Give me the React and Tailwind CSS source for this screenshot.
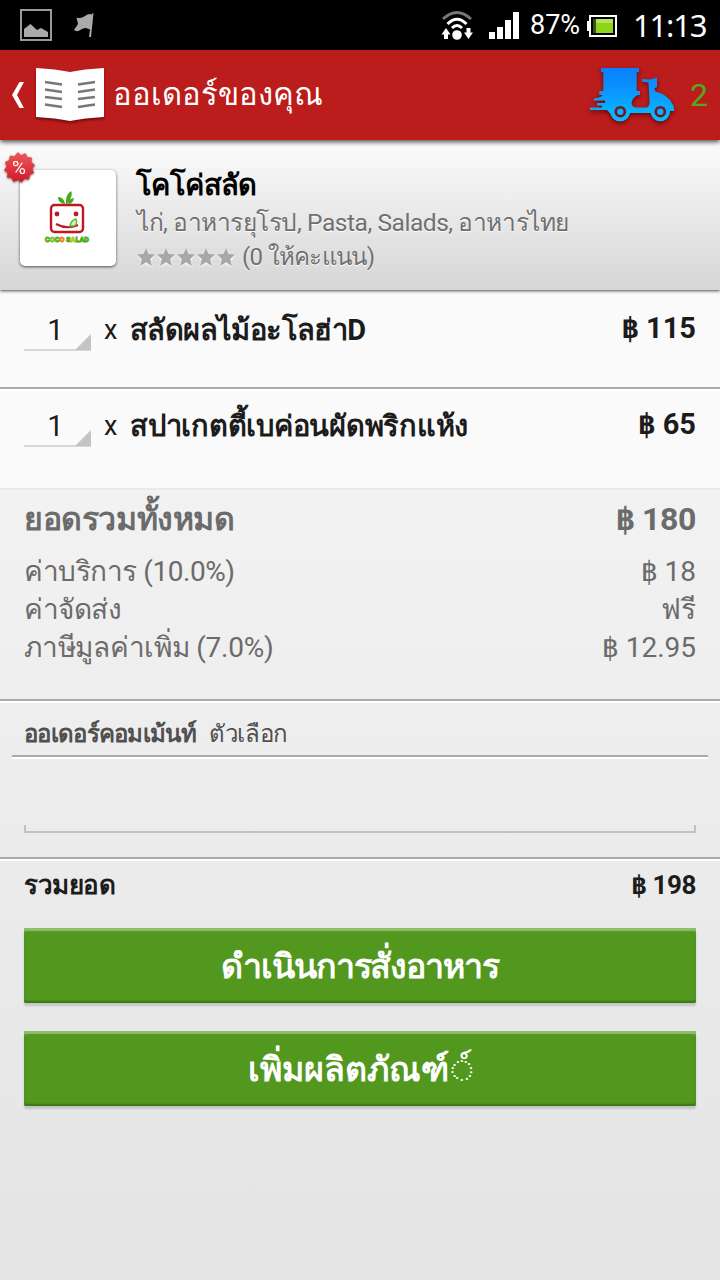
const items = [
  { qty: 1, name: 'สลัดผลไม้อะโลฮ่าD', price: '฿ 115', row: 'h-[97px] pt-[18px]', tracking: 'tracking-[-0.6px]' },
  { qty: 1, name: 'สปาเกตตี้เบค่อนผัดพริกแห้ง', price: '฿ 65', row: 'h-[97px] pt-[13px]', tracking: 'tracking-[-0.25px]' },
];

const fees = [
  { label: 'ค่าบริการ (10.0%)', value: '฿ 18', tracking: 'tracking-[-0.45px]' },
  { label: 'ค่าจัดส่ง', value: 'ฟรี', tracking: 'tracking-[-0.5px]' },
  { label: 'ภาษีมูลค่าเพิ่ม (7.0%)', value: '฿ 12.95', tracking: 'tracking-[-0.25px]' },
];

function StatusBar() {
  return (
    <div className="flex h-[50px] items-center bg-black text-white">
      <svg className="ml-5 h-8 w-8" viewBox="0 0 32 32">
        <rect x="1" y="1" width="30" height="30" fill="none" stroke="#999" strokeWidth="2" />
        <path d="M4 28V20L10.500 15L17 21L21 19L28 23V28Z" fill="#aaa" />
      </svg>
      <svg className="ml-[22px] h-6 w-5" viewBox="0 0 20 24">
        <path d="M2.500 4.500Q7 6 11 3T18 1.500L18.500 0L19.500 0.500L17 24H15L16 16.500Q11 13.500 7 16.500T0 17L4 11Z" fill="#aaa" />
      </svg>
      <div className="flex-1" />
      <svg className="h-8 w-8" viewBox="0 0 32 32">
        <g fill="none" strokeWidth="3">
          <path d="M2 10Q16 -3 30 10" stroke="#777" />
          <path d="M6.500 15Q16 5.500 25.500 15" stroke="#fff" />
          <path d="M11 19Q16 14 21 19" stroke="#fff" />
        </g>
        <circle cx="16" cy="26" r="4.800" fill="#fff" />
        <path d="M5 19L9.500 25.500H7V30H3V25.500H0.500ZM27.500 30L23 23.500H25.500V19H29.500V23.500H32Z" fill="#fff" />
      </svg>
      <svg className="ml-[16px] h-[27px] w-[30px]" viewBox="0 0 30 27">
        <path d="M0 20H6V27H0ZM8 15H14V27H8ZM16 8H22V27H16ZM24 0H30V27H24Z" fill="#fff" />
      </svg>
      <span className="ml-[11px] w-[50px] text-[27px] leading-[54px] whitespace-nowrap">87%</span>
      <svg className="mt-[2px] ml-[7px] h-[22px] w-[30px]" viewBox="0 0 30 22">
        <rect x="3" y="1" width="26" height="20" fill="none" stroke="#fff" strokeWidth="2" />
        <rect x="0" y="6" width="3" height="10" fill="#fff" />
        <rect x="6" y="4" width="20" height="14" fill="#3c4a22" />
        <rect x="9" y="4" width="17" height="14" fill="#8ed516" />
        <rect x="9" y="4" width="17" height="4" fill="#b4e45a" />
      </svg>
      <span className="ml-[16px] w-[87px] font-['Noto_Sans'] text-[31px] leading-[50px] tracking-[-1.2px] whitespace-nowrap">11:13</span>
    </div>
  );
}

function Scooter() {
  return (
    <svg className="h-[60px] w-[90px] drop-shadow-[0_2px_2px_rgba(60,0,0,0.7)]" viewBox="0 0 90 60">
      <defs>
        <linearGradient id="scooter" x1="0" y1="3" x2="0" y2="56" gradientUnits="userSpaceOnUse">
          <stop offset="0" stopColor="#0a80ff" />
          <stop offset="0.4" stopColor="#0b93ff" />
          <stop offset="1" stopColor="#00c0ff" />
        </linearGradient>
      </defs>
      <g fill="url(#scooter)">
        <path d="M13 3H51V7.300H48.700V26H52V30H11.300V26H15.300V7.300H13Z" />
        <path d="M14 29H51.500Q44.500 32 43.500 38Q44 42 47.500 42.500H58Q61.500 42 61.500 37L60.500 17.500L54 16.500V14L62 14.500L69 12.500V22L66.500 23.500L67.500 26.500Q80 30 84 38.500Q86.500 41 86 46H82A10 10 0 0 1 62.500 48H42A10 10 0 0 1 22.500 49L19 45H2V42.500H14V40.500H9V38H17V35.500H5L7 33H10L14 31Z" />
        <circle cx="32.300" cy="46.700" r="9.600" />
        <circle cx="72.300" cy="46.700" r="9.600" />
      </g>
      <g fill="#00b4ff" stroke="#7c1020" strokeWidth="2.600">
        <circle cx="32.300" cy="46.700" r="4.500" />
        <circle cx="72.300" cy="46.700" r="4.500" />
      </g>
    </svg>
  );
}

function ActionBar() {
  return (
    <header className="relative z-10 flex h-[90px] items-center bg-[#bb1c1c] shadow-[0_2px_5px_rgba(0,0,0,0.7)]">
      <svg className="ml-[12px] h-[26px] w-[12px]" viewBox="0 0 12 26">
        <path d="M7.500 0H12L5 13L12 26H7.500L0 13Z" fill="#fff" />
      </svg>
      <svg className="ml-[12px] h-[56px] w-[68px] drop-shadow-[0_2px_1px_rgba(70,0,0,0.6)]" viewBox="0 0 68 56">
        <path d="M0 1Q20 2 34 5Q48 2 68 1V50Q48 51 34 54Q20 51 0 50Z" fill="#fff" />
        <path d="M9 15L26 17.500M9 22.500L26 25M9 30L26 32M9 37.500L26 40M42 17.500L59 15M42 25L59 22.500M42 32L59 30M42 40L59 37.500" stroke="#777" strokeWidth="2.600" fill="none" />
      </svg>
      <h1 className="ml-[9px] text-[31px] leading-[92px] whitespace-nowrap text-white">ออเดอร์ของคุณ</h1>
      <div className="ml-auto flex items-center pr-[12px]">
        <Scooter />
        <span className="ml-[12px] w-[18px] text-[32px] leading-[94px] text-[#54a81f]">2</span>
      </div>
    </header>
  );
}

function CocoLogo() {
  return (
    <svg className="h-[56px] w-[48px]" viewBox="0 0 48 56">
      <path d="M22 14Q21 5 27 1Q30 5 23 14ZM21 14Q20 7 14 7Q14 13 21 14ZM24 14Q25 8 30 8Q29 14 24 14Z" fill="#43a81c" />
      <rect x="7" y="15" width="32" height="27" rx="3.500" fill="#fff" stroke="#c01820" strokeWidth="2.400" />
      <circle cx="13" cy="24" r="2.400" fill="#c01820" />
      <circle cx="32" cy="24" r="2.400" fill="#c01820" />
      <path d="M12 34Q23 40 34 35" fill="none" stroke="#c01820" strokeWidth="2" />
      <path d="M26 36Q27 30 32 29Q34 34 30 36Z" fill="#d3edb8" stroke="#5cb531" strokeWidth="1.300" />
      <text x="1" y="52" fontSize="8" fontWeight="900" textLength="44" lengthAdjust="spacingAndGlyphs" fill="#4fae1e" stroke="#4fae1e" strokeWidth="0.800">
        C<tspan fill="#7cc41c" stroke="#7cc41c">O</tspan>C<tspan fill="#f08020" stroke="#f08020">O</tspan> S<tspan fill="#c0c820" stroke="#c0c820">A</tspan>LAD
      </text>
    </svg>
  );
}

function Restaurant() {
  return (
    <section className="relative z-[1] flex h-[150px] bg-linear-to-b from-[#fcfcfc] to-[#d6d6d6] shadow-[0_1px_3px_rgba(0,0,0,0.7)]">
      <div className="relative mt-[30px] ml-[20px] flex h-[96px] w-[96px] items-center justify-center rounded-[5px] bg-white shadow-[0_1px_3px_rgba(0,0,0,0.65)]">
        <CocoLogo />
        <svg className="absolute -top-[19px] -left-[18px] h-[34px] w-[34px] drop-shadow-[0_1px_1px_rgba(0,0,0,0.5)]" viewBox="1 1 34 34">
          <defs>
            <linearGradient id="badge" x1="0" y1="0" x2="0" y2="1">
              <stop offset="0" stopColor="#ee5a5a" />
              <stop offset="1" stopColor="#d0182a" />
            </linearGradient>
          </defs>
          <path d="M17 2L20 5L24.500 3L26.500 7L31 7.500L30.500 12L34 15L31.500 18.500L33 23L29 25L28 29.500L23.500 29L20.500 32.500L17 30L12.500 32L10.500 28L6 27.500L6.500 23L3 20L5.500 16.500L4 12L8 10L9 5.500L13.500 6Z" fill="url(#badge)" />
          <text x="18" y="23.500" fontSize="19" textAnchor="middle" fill="#fff">%</text>
        </svg>
      </div>
      <div className="mt-[24px] ml-[20px] whitespace-nowrap">
        <h2 className="h-[42px] text-[29px] leading-[42px] font-bold tracking-[-0.6px] text-black">โคโค่สลัด</h2>
        <p className="h-[34px] pl-px text-[24.500px] leading-[34px] tracking-[-0.45px] text-[#707070] [text-shadow:0_1px_1px_#fff]">ไก่, อาหารยุโรป, Pasta, Salads, อาหารไทย</p>
        <div className="flex h-[34px] items-center pl-px text-[#707070]">
          <div className="flex gap-[2px]">
            {[0, 1, 2, 3, 4].map((n) => (
              <svg key={n} className="h-[18px] w-[18px] drop-shadow-[0_1px_1px_#fff]" viewBox="0 0 18 18">
                <path d="M9 0L11.500 6L18 6.500L13.200 11L14.800 18L9 14.300L3.200 18L4.800 11L0 6.500L6.500 6Z" fill="#a8a8a8" />
              </svg>
            ))}
          </div>
          <span className="ml-[7px] text-[24px] leading-[34px] tracking-[-0.7px] [text-shadow:0_1px_1px_#fff]">(0 ให้คะแนน)</span>
        </div>
      </div>
    </section>
  );
}

function OrderItem({ item }) {
  return (
    <li className={`flex ${item.row} items-start justify-between bg-[#fafafa] px-6 text-[29px] leading-[40px] whitespace-nowrap text-[#1c1c1c]`}>
      <div className="flex items-start pt-[2px]">
        <div className="relative h-[41px] w-[67px] border-b-2 border-[#d8d8d8] text-center">
          <span className="mr-1">{item.qty}</span>
          <svg className="absolute right-0 -bottom-[1px] h-[16px] w-[16px]" viewBox="0 0 16 16">
            <path d="M16 0V16H0Z" fill="#c4c4c4" />
          </svg>
        </div>
        <span className="ml-[13px] w-[26px] text-[27px]">x</span>
        <span className={`font-bold ${item.tracking}`}>{item.name}</span>
      </div>
      <span className="font-bold">{item.price}</span>
    </li>
  );
}

function Divider() {
  return <div className="h-[4px] border-t-2 border-[#aaa] bg-white" />;
}

function Summary() {
  return (
    <section className="h-[211px] border-t-2 border-[#e9e9e9] px-6 whitespace-nowrap text-[#6b6b6b]">
      <div className="flex h-[63px] justify-between text-[32px] leading-[58px] font-bold tracking-[-0.4px]">
        <span>ยอดรวมทั้งหมด</span>
        <span>฿ 180</span>
      </div>
      {fees.map((fee) => (
        <div key={fee.label} className="flex h-[38px] justify-between text-[28px] leading-[38px]">
          <span className={fee.tracking}>{fee.label}</span>
          <span>{fee.value}</span>
        </div>
      ))}
    </section>
  );
}

function BigButton({ children }) {
  return (
    <button className="block h-[75px] w-full rounded-[2px] bg-[#52981e] text-[34px] leading-[77px] font-bold whitespace-nowrap text-white shadow-[inset_0_3px_1px_#8fbd6c,inset_0_-2px_2px_#3b7414,0_3px_2px_rgba(0,0,0,0.15)]">
      {children}
    </button>
  );
}

export default function App() {
  return (
    <div className="h-[1280px] w-[720px] overflow-hidden bg-linear-to-b from-[#fbfbfb] to-[#e4e4e4] font-[Roboto,FreeSans,monospace]">
      <StatusBar />
      <ActionBar />
      <Restaurant />
      <ul>
        <OrderItem item={items[0]} />
        <Divider />
        <OrderItem item={items[1]} />
      </ul>
      <Summary />
      <Divider />
      <div className="mx-3 flex h-[52px] items-center px-3 pt-[10px] text-[24px] whitespace-nowrap text-[#505050]">
        <span className="font-bold tracking-[-0.7px]">ออเดอร์คอมเม้นท์</span>
        <span className="ml-[13px] tracking-[-0.35px]">ตัวเลือก</span>
      </div>
      <div className="mx-3">
        <Divider />
      </div>
      <div className="h-[98px] px-6 pt-[66px]">
        <div className="h-[8px] border-x-2 border-b-2 border-[#c2c2c2]" />
      </div>
      <Divider />
      <div className="flex h-[67px] justify-between px-6 text-[26px] leading-[48px] font-bold tracking-[-0.4px] whitespace-nowrap text-[#1c1c1c]">
        <span>รวมยอด</span>
        <span>฿ 198</span>
      </div>
      <div className="flex flex-col gap-[28px] px-6">
        <BigButton>
          <span className="tracking-[-1.1px]">ดำเนินการสั่งอาหาร</span>
        </BigButton>
        <BigButton>
          เพิ่มผลิตภัณฑ์<span className="ml-[2px] text-[36px] font-normal">◌์</span>
        </BigButton>
      </div>
    </div>
  );
}
